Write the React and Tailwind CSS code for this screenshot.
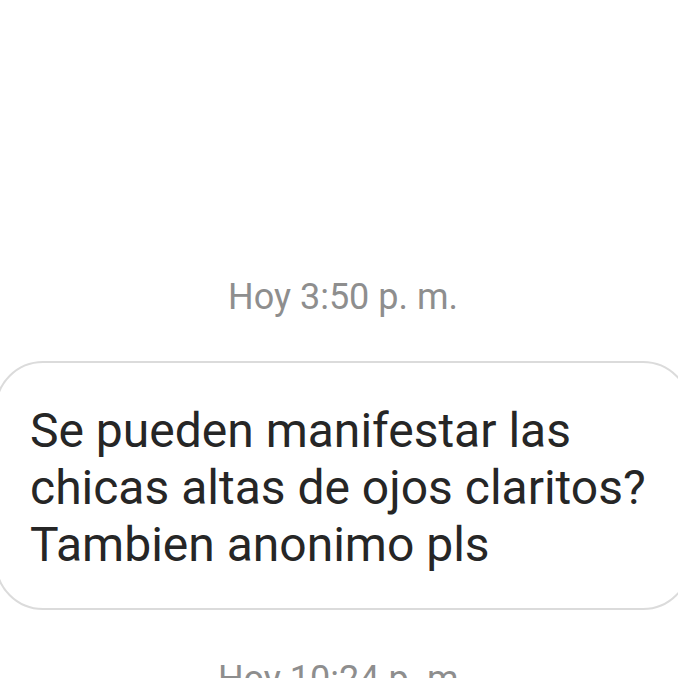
export default function App() {
  return (
    <div className="w-[678px] h-[678px] overflow-hidden bg-white font-['Roboto',sans-serif]">
      <div className="h-[276px]" />
      <div className="pl-[8px] text-center text-[36px] leading-[42px] text-[#8e8e8e]">Hoy 3:50 p. m.</div>
      <div className="h-[43px]" />
      <div className="-ml-[5px] w-[696px] rounded-[48px] border-2 border-[#dbdbdb] pl-[33px] pt-[39px] pb-[35px]">
        <p className="text-[48px] leading-[57px] text-[#262626]">
          Se pueden manifestar las
          <br />
          chicas altas de ojos claritos?
          <br />
          Tambien anonimo pls
        </p>
      </div>
      <div className="h-[48px]" />
      <div className="pl-[8px] text-center text-[36px] leading-[42px] text-[#8e8e8e]">Hoy 10:24 p. m.</div>
    </div>
  );
}
